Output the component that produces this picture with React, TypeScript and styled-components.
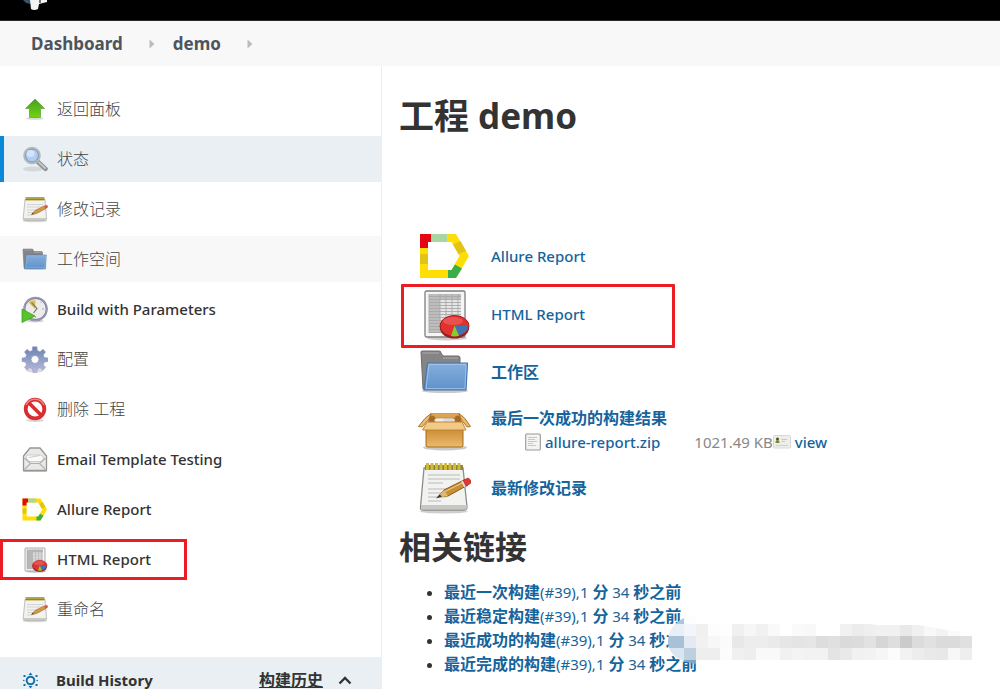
import React from "react";
import styled, { createGlobalStyle, css } from "styled-components";

const GlobalStyle = createGlobalStyle`
  * { box-sizing: border-box; }
  html, body, #root { height: 100%; }
  body {
    margin: 0;
    background: #fff;
    color: #333;
    font-family: "Noto Sans", "Noto Sans CJK SC", sans-serif;
    font-size: 15px;
    line-height: 24px;
    overflow: hidden;
  }
  a { text-decoration: none; }
`;

const Page = styled.div`
  display: flex;
  flex-direction: column;
  min-height: 100%;
`;

const TopBar = styled.header`
  height: 21px;
  flex: none;
  padding-left: 22px;
  background: #000;
  border-bottom: 1px solid #2b2b2b;
  svg { display: block; }
`;

const Breadcrumbs = styled.nav`
  display: flex;
  align-items: center;
  flex: none;
  height: 45px;
  padding-left: 31px;
  background: #f8f8f8;
`;

const Crumb = styled.a`
  color: #4d545d;
  font-size: 17px;
  font-weight: 700;
`;

const CrumbArrow = styled.svg`
  margin: 0 18px 0 26px;
`;

const Body = styled.div`
  display: flex;
  flex: 1;
`;

const Sidebar = styled.aside`
  flex: none;
  width: 382px;
  padding-top: 20px;
  border-right: 1px solid #eaeff2;
`;

const TaskList = styled.ul`
  display: flex;
  flex-direction: column;
  gap: 4px;
  margin: 0 0 25px;
  padding: 0;
  list-style: none;
`;

const TaskItem = styled.li`
  position: relative;
`;

const TaskLink = styled.a<{ $state?: "active" | "hover"; $cjk?: boolean }>`
  display: flex;
  align-items: center;
  gap: 9px;
  height: 46px;
  padding-left: 21px;
  color: ${(p) => (p.$cjk ? "#444" : "#333")};
  font-size: ${(p) => (p.$cjk ? 16 : 15)}px;
  font-weight: ${(p) => (p.$cjk ? 300 : 500)};
  ${(p) => p.$state === "active" && css`
    background: #e9eff2;
    box-shadow: inset 4px 0 0 #0b88d8;
  `}
  ${(p) => p.$state === "hover" && css`background: #f8f8f8;`}
  svg { flex: none; width: 27px; height: 27px; }
`;

const SideMark = styled.span`
  position: absolute;
  top: 3px;
  left: 0;
  width: 187px;
  height: 41px;
  border: 3px solid #ed1c24;
  pointer-events: none;
`;

const HistoryHead = styled.section`
  display: flex;
  align-items: center;
  height: 46px;
  padding: 0 29px 0 22px;
  background: #e9eff2;
  svg { flex: none; }
`;

const HistoryTitle = styled.h2`
  flex: 1;
  margin: 0 0 0 17px;
  font-size: 15px;
  line-height: 24px;
  font-weight: 700;
`;

const HistoryLink = styled.a`
  margin-right: 15px;
  color: #333;
  font-size: 16px;
  font-weight: 700;
  text-decoration: underline;
`;

const IconButton = styled.button`
  display: flex;
  padding: 0;
  border: 0;
  background: none;
`;

const Main = styled.main`
  flex: 1;
  min-width: 0;
  padding: 26px 17px 0;
`;

const Title = styled.h1`
  margin: 0 0 87px;
  font-size: 35px;
  line-height: 48px;
  font-weight: 700;
`;

const Subtitle = styled.h2`
  margin: 6px 0 9px;
  font-size: 32px;
  line-height: 48px;
  font-weight: 700;
`;

const Summary = styled.div`
  display: flex;
  flex-direction: column;
`;

const SummaryRow = styled.div`
  position: relative;
  display: flex;
  align-items: center;
  gap: 20px;
  height: 58px;
  padding-left: 18px;
  > svg { flex: none; width: 54px; height: 54px; }
`;

const Link = styled.a<{ $cjk?: boolean }>`
  color: #15649c;
  font-size: ${(p) => (p.$cjk ? 16 : 15)}px;
  font-weight: ${(p) => (p.$cjk ? 700 : 500)};
`;

const SummaryMark = styled.span`
  position: absolute;
  top: -1px;
  left: 2px;
  width: 274px;
  height: 64px;
  border: 3px solid #ed1c24;
  border-radius: 1px;
  pointer-events: none;
`;

const ArtifactLine = styled.div`
  display: flex;
  align-items: center;
  padding-left: 34px;
  svg { flex: none; }
  a { margin-left: 4px; }
`;

const Size = styled.span`
  margin-left: 34px;
  color: #888;
`;

const Builds = styled.ul`
  margin: 0;
  padding-left: 45px;
  li { height: 24px; line-height: 24px; white-space: nowrap; }
`;

const BuildLink = styled.a`
  color: #15649c;
  b { font-size: 16px; font-weight: 700; }
`;

const Overlay = styled.svg`
  position: absolute;
  top: 616px;
  left: 668px;
`;

function UpArrow() {
  return (
    <svg viewBox="0 0 27 27">
      <defs>
        <linearGradient id="up" x1="0" y1="0" x2="0" y2="1">
          <stop offset="0" stopColor="#4b9c25" /><stop offset="1" stopColor="#6fd60c" />
        </linearGradient>
      </defs>
      <ellipse cx="14" cy="22.500" rx="9" ry="1.500" fill="#ccc" opacity=".7" />
      <path d="M14 3 23.500 12.500H19.500V21.500H8.500V12.500H4.500Z" fill="url(#up)" stroke="#63a83d" strokeWidth=".8" strokeLinejoin="round" />
    </svg>
  );
}

function Magnifier() {
  return (
    <svg viewBox="0 0 27 27">
      <ellipse cx="12" cy="23" rx="10" ry="2.500" fill="#cdd2d5" opacity=".8" />
      <path d="M17 16 24.500 22.800" stroke="#8f9294" strokeWidth="4.500" strokeLinecap="round" />
      <path d="M18 16.500 24 22" stroke="#c4c6c8" strokeWidth="2" strokeLinecap="round" />
      <circle cx="11" cy="9.500" r="7.700" fill="#b1cdf0" stroke="#b5b9bb" strokeWidth="2.200" />
      <circle cx="11" cy="9.500" r="6.400" fill="none" stroke="#6e93c5" strokeWidth=".9" />
      <ellipse cx="9.500" cy="7.500" rx="4" ry="3.500" fill="#dceafa" opacity=".8" />
    </svg>
  );
}

function SmallNotepad() {
  return (
    <svg viewBox="0 0 27 27">
      <ellipse cx="14" cy="25" rx="12" ry="1.300" fill="#bbb" opacity=".6" />
      <path d="M4 3.500H24L25.500 23Q25.500 24.500 24 24.500H3.500Q2 24.500 2.200 23Z" fill="#f2f2f0" stroke="#b0b0ac" strokeWidth=".8" />
      <path d="M2.500 22H25.300V24H2.500Z" fill="#c9c9c6" />
      <path d="M6 8.500H22M6 11H20M6 14H16M6 16.500H12M6 19H11" stroke="#d0d0ce" strokeWidth=".9" />
      <path d="M4.500 1H23.500V4.500H4.500Z" fill="#b5a548" />
      <path d="M4.500 3.500H23.500" stroke="#8d8444" />
      <path d="M10.500 18.500 14 14.500 23.500 9.800 25 12.500 15.500 17.500Z" fill="#d29a44" stroke="#94692c" strokeWidth=".6" />
      <path d="M10.300 18.700 12 16.500 13.300 18Z" fill="#6b5434" />
      <path d="M23.200 10 25.700 9Q27 9.500 27 11.200L24.600 12.800Z" fill="#dd5148" />
    </svg>
  );
}

function Notepad() {
  return (
    <svg viewBox="0 0 54 54">
      <ellipse cx="27" cy="50.500" rx="24" ry="2" fill="#bbb" opacity=".7" />
      <path d="M7 7H46L50 46Q50 49 47 49H6Q3 49 3.500 46Z" fill="#f2f2f1" stroke="#8d8d89" strokeWidth="1.300" />
      <path d="M4 44H50L49.500 48.500H4Z" fill="#c7c7c4" />
      <path d="M11 14H43M11 18H43M11 22H26M11 28H38M11 32H32M11 36H29M11 40H24" stroke="#b9b9b9" strokeWidth="1.200" />
      <path d="M8 4H46V9H8Z" fill="#8d8444" />
      <path d="M10.500 2V9M15 2V9M19.500 2V9M24 2V9M28.500 2V9M33 2V9M37.500 2V9M42 2V9" stroke="#d0bd35" strokeWidth="2.900" />
      <path d="M21 36 27 29 48 18.500 51 24 31 35Z" fill="#c98f35" stroke="#805a21" strokeWidth="1" />
      <path d="M27 31 48 20.500" stroke="#f1c378" strokeWidth="1.300" />
      <path d="M20 37 27 29 31 35Z" fill="#dfb878" />
      <path d="M19 37.500 22.500 33.500 25 35.500Z" fill="#333" />
      <path d="M46 19.500 51 17Q54 18 54 22L48.500 25.500Z" fill="#e03735" stroke="#aa2924" strokeWidth=".7" />
      <path d="M45 20 48 26" stroke="#ddd" strokeWidth="1.700" />
    </svg>
  );
}

function Folder() {
  return (
    <svg viewBox="0 0 54 54">
      <defs>
        <linearGradient id="folder" x1="0" y1="0" x2="0" y2="1">
          <stop offset="0" stopColor="#85aedb" /><stop offset="1" stopColor="#5f92cb" />
        </linearGradient>
      </defs>
      <ellipse cx="28" cy="46" rx="23" ry="2" fill="#bbb" opacity=".8" />
      <path d="M4 7Q4 6 5 6H22Q24 6 24 8L26 11H41Q43 11 43 13V44H6Z" fill="#858585" stroke="#6c6c6c" strokeWidth="1" />
      <path d="M5.500 8H22M26 13H41" stroke="#ababab" strokeWidth="1.200" />
      <path d="M10.500 18H50.500L49 45H7Z" fill="url(#folder)" stroke="#4676b0" strokeWidth="1.200" strokeLinejoin="round" />
      <path d="M12 19.500H49L48 43.500H9Z" fill="none" stroke="#a9c7ea" strokeWidth=".8" />
    </svg>
  );
}

function ClockBuild() {
  return (
    <svg viewBox="0 0 27 27">
      <ellipse cx="14" cy="25" rx="9" ry="1.500" fill="#bbb" opacity=".6" />
      <circle cx="14.500" cy="13" r="11.200" fill="#ecece8" stroke="#8583a6" strokeWidth="2.200" />
      <circle cx="14.500" cy="13" r="11.600" fill="none" stroke="#aaaac5" strokeWidth=".7" />
      <path d="M14 13 7.500 6.500Q11 3.500 14.500 4.500Z" fill="#dcc04a" />
      <path d="M10.500 6.500 16 12.500 12.500 17" fill="none" stroke="#777" strokeWidth="1.200" />
      <path d="M21 13H23M14.500 20V22M19.500 7 20.500 6" stroke="#aaa" />
      <path d="M1 13 14 20 1 26.500Z" fill="#55c52c" stroke="#459a27" strokeWidth=".8" />
    </svg>
  );
}

function Gear() {
  return (
    <svg viewBox="0 0 27 27">
      <defs>
        <linearGradient id="gear" gradientUnits="userSpaceOnUse" x1="0" y1="0" x2="0" y2="27">
          <stop offset="0" stopColor="#6683b0" /><stop offset="1" stopColor="#bcbbdc" />
        </linearGradient>
      </defs>
      <ellipse cx="14" cy="24.500" rx="9" ry="2" fill="#ccc" opacity=".7" />
      <path
        d="M11.500 .8H16L16.300 4.500 19 5.700 22 3.300 24.500 6 22.300 9 23.300 11.500 27 12V15.500L23.300 16.200 22.300 18.700 24.500 21.500 22 24 19 22 16.300 23 15.800 26.500H12L11.500 23 8.800 22 6 24 3.500 21.500 5.500 18.700 4.500 16.200 1 15.500V12L4.500 11.500 5.500 9 3.500 6 6 3.300 8.800 5.500 11.300 4.500Z"
        fill="url(#gear)" stroke="#8d94b8" strokeWidth=".5" strokeLinejoin="round"
      />
      <circle cx="14" cy="13.500" r="4" fill="#fff" stroke="#8e96bd" strokeWidth=".8" />
    </svg>
  );
}

function Forbidden() {
  return (
    <svg viewBox="0 0 27 27">
      <ellipse cx="14" cy="24.500" rx="9" ry="1.500" fill="#bbb" opacity=".6" />
      <circle cx="14" cy="13" r="9.300" fill="#fff" stroke="#d92d2f" strokeWidth="3.800" />
      <path d="M7.500 6.500 20.500 19.500" stroke="#d92d2f" strokeWidth="3.500" />
      <path d="M5 9A10 10 0 0 1 23 9" fill="none" stroke="#ed8787" strokeWidth="1.500" />
    </svg>
  );
}

function Envelope() {
  return (
    <svg viewBox="0 0 27 27">
      <path d="M2.500 10 9 2H19L25.500 10V24.500H2.500Z" fill="#e9e9e7" stroke="#969694" strokeWidth="1.300" strokeLinejoin="round" />
      <path d="M6 9H20L23 12 20.500 15.500H8L5 12Z" fill="#fafafa" stroke="#c4c4c4" strokeWidth=".8" />
      <path d="M3.500 12 9.500 17.500 3.500 23.500M24.500 12 18.500 17.500 24.500 23.500M9.500 17.500H18.500" fill="none" stroke="#b1b1af" strokeWidth="1.200" />
      <path d="M7.500 11.500 19 9.500" stroke="#ccc" />
      <path d="M2.500 25.500H25.500" stroke="#bbb" />
    </svg>
  );
}

function AllureLogo() {
  return (
    <svg viewBox="0 0 54 54">
      <path d="M3 5H39L52 27 39 49H3ZM11 13V41H34.500L42.500 27 34.500 13Z" fill="#ffde05" fillRule="evenodd" />
      <path d="M3 5H14V13H11V19H3Z" fill="#e30613" />
      <path d="M14 5H30V13H14Z" fill="#a8d5a2" />
      <path d="M36 15.500 43.500 12 49 22 41.500 25Z" fill="#e1c414" />
      <path d="M3 25H11V35H3Z" fill="#e1c414" />
      <path d="M31 41H34.500L38 35.500 45 39.500 39 49H31Z" fill="#3bad49" />
    </svg>
  );
}

function SheetChart() {
  return (
    <svg viewBox="0 0 54 54">
      <ellipse cx="30" cy="51" rx="20" ry="2.500" fill="#bbb" opacity=".7" />
      <rect x="8" y="4" width="40" height="46" rx="1.500" fill="#f5f5f5" stroke="#7e7e7e" strokeWidth="1.300" />
      <path d="M12 7H44V46H12Z" fill="#e6e6e6" />
      <path d="M12 7H44V12H23V46H12Z" fill="#bdbdbd" />
      <path d="M12 7V46M23 7V46M29 7V46M35 7V46M41 7V46M12 9.500H44M12 12.500H44M12 15.500H44M12 18.500H44M12 21.500H44M12 24.500H44M12 27.500H44M12 30.500H44M12 33.500H44M12 36.500H44M12 39.500H44M12 42.500H44M12 45.500H44" stroke="#a8a8a8" strokeWidth=".9" />
      <ellipse cx="37.500" cy="41" rx="14.500" ry="10.500" fill="#8d2020" />
      <ellipse cx="37.500" cy="39" rx="14.500" ry="10.500" fill="#e23230" stroke="#a31b1b" strokeWidth="1" />
      <path d="M37.500 38.500H51.500Q51 45 42 48.500Z" fill="#3e73b5" />
      <path d="M37.500 38.500 42 48.800Q38 50 34 49Z" fill="#82cf2e" />
      <ellipse cx="36" cy="34" rx="10" ry="4" fill="#f47b75" opacity=".45" />
    </svg>
  );
}

function OpenBox() {
  return (
    <svg viewBox="0 0 54 54">
      <defs>
        <linearGradient id="box" x1="0" y1="0" x2="0" y2="1">
          <stop offset="0" stopColor="#c9872c" /><stop offset="1" stopColor="#e9bb70" />
        </linearGradient>
      </defs>
      <ellipse cx="28" cy="44.500" rx="22" ry="3" fill="#bbb" opacity=".8" />
      <path d="M9 24H46V42Q46 44 44 44H11Q9 44 9 42Z" fill="url(#box)" stroke="#a66a1d" />
      <path d="M14 11H42L47 24H9Z" fill="#a66b25" />
      <ellipse cx="23.500" cy="17.500" rx="6" ry="3.500" fill="#eee" /><ellipse cx="32" cy="17.500" rx="6" ry="3.500" fill="#ddd" />
      <path d="M14 10.500H42V13H39L38 15H18L17 13H14Z" fill="#dda553" stroke="#b17a30" strokeWidth=".6" />
      <path d="M14 10.500Q8 14 1.500 23.500L5 24 12 16Z" fill="#e9bb73" stroke="#a66a1d" strokeWidth=".9" />
      <path d="M42 10.500Q48 14 53.500 23.500L50 24 44 16Z" fill="#e9bb73" stroke="#a66a1d" strokeWidth=".9" />
      <path d="M10 19H45L49 27H5.500Z" fill="#f2ca88" stroke="#bd802f" strokeWidth=".9" />
    </svg>
  );
}

function FileIcon() {
  return (
    <svg width="16" height="18" viewBox="0 0 16 18">
      <rect x=".7" y="1" width="14.600" height="16" rx="1" fill="#f4f4f3" stroke="#979797" strokeWidth="1.100" />
      <path d="M3 4.500H12M3 6.500H10M3 8.500H12M3 10.500H8M3 12.500H11" stroke="#c2c2c2" strokeWidth=".9" />
    </svg>
  );
}

function CardIcon() {
  return (
    <svg width="18" height="14" viewBox="0 0 18 14">
      <rect x=".5" y=".5" width="17" height="12.500" rx="1" fill="#ededeb" stroke="#d8d8d6" />
      <circle cx="4.500" cy="4" r="1.500" fill="#594727" />
      <path d="M2.500 8Q2.500 5 4.500 5T6.500 8Z" fill="#7e8927" />
      <path d="M8.500 4.500H14M8.500 6.500H12" stroke="#c9c9c9" /><path d="M3 10.500H15" stroke="#d0d0d0" />
    </svg>
  );
}

function HistoryIcon() {
  return (
    <svg width="17" height="17" viewBox="0 0 17 17">
      <circle cx="8.500" cy="8.500" r="3.800" fill="none" stroke="#1670a8" strokeWidth="2" />
      <g fill="#1670a8">
        <path d="M6.500 3 8.500 .5 10.500 3ZM6.500 14 8.500 16.500 10.500 14Z" />
        <path d="M1.500 3H3.500V5H1.500ZM13.500 3H15.500V5H13.500ZM1.500 12H3.500V14H1.500ZM13.500 12H15.500V14H13.500Z" />
        <circle cx="1.800" cy="8.500" r=".8" /><circle cx="15.200" cy="8.500" r=".8" />
      </g>
    </svg>
  );
}

const tasks: { label: string; Icon: () => React.JSX.Element; cjk?: boolean; state?: "active" | "hover"; marked?: boolean }[] = [
  { label: "返回面板", Icon: UpArrow, cjk: true },
  { label: "状态", Icon: Magnifier, cjk: true, state: "active" },
  { label: "修改记录", Icon: SmallNotepad, cjk: true },
  { label: "工作空间", Icon: Folder, cjk: true, state: "hover" },
  { label: "Build with Parameters", Icon: ClockBuild },
  { label: "配置", Icon: Gear, cjk: true },
  { label: "删除 工程", Icon: Forbidden, cjk: true },
  { label: "Email Template Testing", Icon: Envelope },
  { label: "Allure Report", Icon: AllureLogo },
  { label: "HTML Report", Icon: SheetChart, marked: true },
  { label: "重命名", Icon: SmallNotepad, cjk: true },
];

const builds = ["最近一次构建", "最近稳定构建", "最近成功的构建", "最近完成的构建"];

/* Grey levels of the pixelated strip, one row of 12px cells per line. */
const mosaic = [
  [248, 240, 253, 254, 240, 246, 241, 249, 255, 250, 248, 255, 255, 241, 236, 239, 241, 241, 233, 240, 248, 243, 250, 255],
  [232, 241, 247, 251, 232, 237, 237, 234, 230, 228, 230, 221, 224, 218, 220, 226, 214, 222, 203, 220, 225, 219, 219, 224],
  [200, 238, 238, 252, 240, 238, 249, 249, 241, 244, 242, 242, 228, 233, 241, 242, 246, 252, 242, 237, 233, 232, 247, 238],
];

function Mosaic() {
  return (
    <Overlay width="305" height="48" viewBox="0 0 305 48" aria-hidden="true">
      <defs>
        <clipPath id="disc"><path d="M16 2Q0 10 0 25T18 46L28 48V0Z" /></clipPath>
        <clipPath id="strip"><path d="M28 8H200L210 9H250L268 12 285 15 304 16V44H28Z" /></clipPath>
      </defs>
      <g clipPath="url(#strip)" shapeRendering="crispEdges">
        {mosaic.map((row, y) => row.map((v, x) => (
          <rect key={`${x}-${y}`} x={16 + x * 12} y={8 + y * 12} width="12" height="12" fill={`rgb(${v},${v},${v})`} />
        )))}
      </g>
      <g clipPath="url(#disc)">
        <path d="M0 0H16V8H0Z" fill="#a9c8dd" />
        <path d="M16 0H28V8H16Z" fill="#fdfdfd" />
        <path d="M0 8H16V20H0Z" fill="#e8eff5" /><path d="M16 8H28V20H16Z" fill="#f2f5f9" />
        <path d="M0 20H16V32H0Z" fill="#a8c1d7" /><path d="M16 20H28V32H16Z" fill="#e3eaf3" />
        <path d="M0 32H16V48H0Z" fill="#dae5ef" /><path d="M16 32H28V44H16Z" fill="#bdd0dd" />
        <path d="M16 44H28V48H16Z" fill="#7fa8c8" />
      </g>
    </Overlay>
  );
}

function Arrow() {
  return <CrumbArrow width="6" height="10" viewBox="0 0 6 10"><path d="M.5 .5 5.500 5 .5 9.500Z" fill="#bcbcbc" /></CrumbArrow>;
}

export default function App() {
  return (
    <Page>
      <GlobalStyle />
      <TopBar>
        <svg width="28" height="12" viewBox="0 0 28 12">
          <path d="M1 0H9V4L4 3Z" fill="#35546b" />
          <path d="M8 0H25V2L17 4 16 9Q12 11 9 9Z" fill="#f3f3f3" />
          <path d="M17 0H19V3H17Z" fill="#6b7985" />
        </svg>
      </TopBar>
      <Breadcrumbs>
        <Crumb href="#">Dashboard</Crumb><Arrow />
        <Crumb href="#">demo</Crumb><Arrow />
      </Breadcrumbs>
      <Body>
        <Sidebar>
          <TaskList>
            {tasks.map(({ label, Icon, cjk, state, marked }) => (
              <TaskItem key={label}>
                <TaskLink href="#" $cjk={cjk} $state={state}><Icon />{label}</TaskLink>
                {marked && <SideMark />}
              </TaskItem>
            ))}
          </TaskList>
          <HistoryHead>
            <HistoryIcon />
            <HistoryTitle>Build History</HistoryTitle>
            <HistoryLink href="#">构建历史</HistoryLink>
            <IconButton aria-label="Collapse">
              <svg width="14" height="10" viewBox="0 0 14 10"><path d="M1.500 8.500 7 3 12.500 8.500" fill="none" stroke="#333" strokeWidth="2.300" /></svg>
            </IconButton>
          </HistoryHead>
        </Sidebar>
        <Main>
          <Title>工程 demo</Title>
          <Summary>
            <SummaryRow><AllureLogo /><Link href="#">Allure Report</Link></SummaryRow>
            <SummaryRow><SheetChart /><Link href="#">HTML Report</Link><SummaryMark /></SummaryRow>
            <SummaryRow><Folder /><Link href="#" $cjk>工作区</Link></SummaryRow>
            <SummaryRow>
              <OpenBox />
              <div>
                <Link href="#" $cjk>最后一次成功的构建结果</Link>
                <ArtifactLine>
                  <FileIcon /><Link href="#">allure-report.zip</Link>
                  <Size>1021.49 KB</Size><CardIcon /><Link href="#">view</Link>
                </ArtifactLine>
              </div>
            </SummaryRow>
            <SummaryRow><Notepad /><Link href="#" $cjk>最新修改记录</Link></SummaryRow>
          </Summary>
          <Subtitle>相关链接</Subtitle>
          <Builds>
            {builds.map((name) => (
              <li key={name}>
                <BuildLink href="#"><b>{name}</b>(#39),1 <b>分</b> 34 <b>秒之前</b></BuildLink>
              </li>
            ))}
          </Builds>
        </Main>
      </Body>
      <Mosaic />
    </Page>
  );
}
